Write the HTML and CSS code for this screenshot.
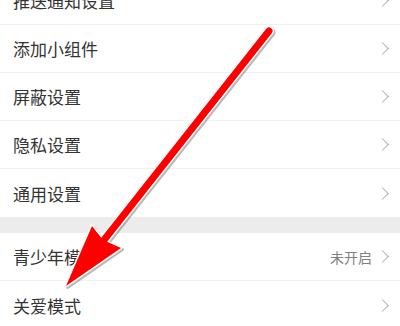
FILE: index.html
```html
<!DOCTYPE html>
<html lang="zh-CN">
<head>
  <meta charset="UTF-8" />
  <meta name="viewport" content="width=device-width, initial-scale=1.0"/>
  <title>设置</title>
  <link rel="stylesheet" href="styles.css">
</head>
<body>
  <div class="settings">
    <div class="group">
      <div class="row"><span class="label">推送通知设置</span><span class="chev"></span></div>
      <div class="row"><span class="label">添加小组件</span><span class="chev"></span></div>
      <div class="row"><span class="label">屏蔽设置</span><span class="chev"></span></div>
      <div class="row"><span class="label">隐私设置</span><span class="chev"></span></div>
      <div class="row"><span class="label">通用设置</span><span class="chev"></span></div>
    </div>
    <div class="gap"></div>
    <div class="group">
      <div class="row"><span class="label">青少年模式</span><span class="value">未开启</span><span class="chev"></span></div>
      <div class="row"><span class="label">关爱模式</span><span class="chev"></span></div>
    </div>
  </div>

  <!-- annotation arrow drawn over the list -->
  <svg class="arrow" width="400" height="326" viewBox="0 0 400 326">
    <g transform="translate(1.5 1.5)" opacity="0.45">
      <line x1="269" y1="31" x2="104" y2="240" stroke="#666" stroke-width="10" stroke-linecap="round"/>
      <polygon points="66,286 92,226 103,240 121,248" fill="#666" stroke="#666" stroke-width="3" stroke-linejoin="round"/>
    </g>
    <line x1="269" y1="31" x2="104" y2="240" stroke="#fff" stroke-width="10" stroke-linecap="round"/>
    <polygon points="66,286 92,226 103,240 121,248" fill="#fff" stroke="#fff" stroke-width="3" stroke-linejoin="round"/>
    <line x1="269" y1="31" x2="104" y2="240" stroke="#f00" stroke-width="7" stroke-linecap="round"/>
    <polygon points="66,286 92,226 103,240 121,248" fill="#f00"/>
  </svg>
</body>
</html>
```

FILE: styles.css
```css
body {
  margin: 0;
  background: #fff;
  font-family: "Noto Sans CJK SC", "Noto Sans", sans-serif;
  color: #333;
  overflow: hidden;
  position: relative;
  width: 400px;
  height: 326px;
}
.settings {
  margin-top: -23px;
}
.row {
  display: flex;
  align-items: center;
  height: 48px;
  padding: 0 12px 0 13px;
  border-bottom: 1px solid #f0f0f0;
  box-sizing: border-box;
}
.group .row:last-child {
  border-bottom: none;
}
.label {
  flex: 1;
  font-size: 17px;
  color: #333;
}
.value {
  font-size: 14px;
  color: #808080;
  margin-right: 6px;
}
.chev {
  width: 8px;
  height: 8px;
  border-top: 1.3px solid #b0b0b0;
  border-right: 1.3px solid #b0b0b0;
  transform: rotate(45deg);
  margin-right: 1px;
}
.gap {
  height: 16px;
  background: #ececec;
}
.arrow {
  position: absolute;
  top: 0;
  left: 0;
}
```
